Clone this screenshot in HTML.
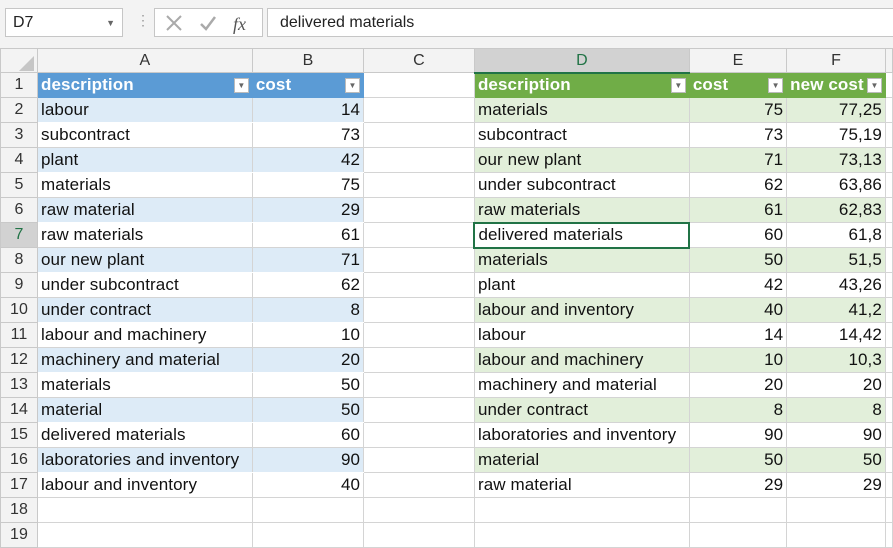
<!DOCTYPE html>
<html><head><style>
*{margin:0;padding:0;box-sizing:border-box}
body{width:893px;height:527px;overflow:hidden;background:#fff;font-family:"Liberation Sans",sans-serif;position:relative}
#top{position:absolute;left:0;top:0;width:893px;height:48px;background:#f3f3f3}
#nb{position:absolute;left:5px;top:8px;width:118px;height:29px;background:#fff;border:1px solid #c6c6c6;font-size:16px;padding:5px 0 0 7px;color:#222}
#nb span{position:absolute;right:7px;top:9px;font-size:9px;color:#666}
#dots{position:absolute;left:136px;top:12px;color:#999;font-size:14px}
#ic{position:absolute;left:154px;top:8px;width:109px;height:29px;background:#fff;border:1px solid #c6c6c6}
#fb{position:absolute;left:267px;top:8px;width:630px;height:29px;background:#fff;border:1px solid #c6c6c6;font-size:16px;padding:5px 0 0 12px;color:#222}
table{position:absolute;left:0;top:48px;border-collapse:collapse;table-layout:fixed;font-size:17px;letter-spacing:0.1px}
td{height:25px;line-height:22px;border:1px solid #d4d4d4;padding:0 3px;white-space:nowrap;overflow:hidden;color:#111}
tr.h td{height:24px;line-height:21px;background:#f3f3f3;text-align:center;color:#333;border-color:#c9c9c9;font-size:16px}
td.r{background:#f3f3f3;text-align:center;color:#333;border-color:#c9c9c9;padding:0;font-size:16px}
.n{text-align:right}
.bh{background:#5b9bd5;color:#fff;font-weight:bold;border-color:#5b9bd5}
.gh{background:#70ad47;color:#fff;font-weight:bold;border-color:#70ad47}
.bb{background:#ddebf7;border-color:#fff #d4d4d4 #fff #d4d4d4}
.gb{background:#e2efda}
.dd{float:right;width:15px;height:15px;background:#fff;border:1px solid #bbb;margin-top:4px;font-size:8px;color:#666;text-align:center;line-height:13px;font-weight:normal}
</style></head><body>
<div id="top">
<div id="nb">D7<span>▼</span></div>
<div id="dots">⋮</div>
<div id="ic"><svg width="109" height="29"><path d="M12 7l14 14M26 7L12 21" stroke="#aaa" stroke-width="2"/><path d="M46 15l5 5 9-12" stroke="#aaa" stroke-width="2.5" fill="none"/><text x="78" y="21" font-family="Liberation Serif" font-style="italic" font-size="18" fill="#555">fx</text></svg></div>
<div id="fb">delivered materials</div>
</div>
<table>
<colgroup><col style="width:36px"><col style="width:215px"><col style="width:112px"><col style="width:112px"><col style="width:215px"><col style="width:98px"><col style="width:99px"><col style="width:6px"></colgroup>
<tr class="h"><td style="padding:0"><svg width="36" height="22" style="display:block"><path d="M33 6L33 21 18 21Z" fill="#c6c6c6"/></svg></td><td>A</td><td>B</td><td>C</td><td style="background:#d2d2d2;color:#217346;border-bottom:2px solid #217346">D</td><td>E</td><td>F</td><td></td></tr>
<tr><td class="r">1</td><td class="bh">description<span class="dd">▼</span></td><td class="bh">cost<span class="dd">▼</span></td><td></td><td class="gh">description<span class="dd">▼</span></td><td class="gh">cost<span class="dd">▼</span></td><td class="gh">new cost<span class="dd">▼</span></td><td></td></tr>
<tr><td class="r">2</td><td class="bb">labour</td><td class="bb n">14</td><td></td><td class="gb">materials</td><td class="gb n">75</td><td class="gb n">77,25</td><td></td></tr>
<tr><td class="r">3</td><td>subcontract</td><td class="n">73</td><td></td><td>subcontract</td><td class="n">73</td><td class="n">75,19</td><td></td></tr>
<tr><td class="r">4</td><td class="bb">plant</td><td class="bb n">42</td><td></td><td class="gb">our new plant</td><td class="gb n">71</td><td class="gb n">73,13</td><td></td></tr>
<tr><td class="r">5</td><td>materials</td><td class="n">75</td><td></td><td>under subcontract</td><td class="n">62</td><td class="n">63,86</td><td></td></tr>
<tr><td class="r">6</td><td class="bb">raw material</td><td class="bb n">29</td><td></td><td class="gb">raw materials</td><td class="gb n">61</td><td class="gb n">62,83</td><td></td></tr>
<tr><td class="r" style="background:#d2d2d2;color:#217346">7</td><td>raw materials</td><td class="n">61</td><td></td><td style="border:2px solid #217346">delivered materials</td><td class="n">60</td><td class="n">61,8</td><td></td></tr>
<tr><td class="r">8</td><td class="bb">our new plant</td><td class="bb n">71</td><td></td><td class="gb">materials</td><td class="gb n">50</td><td class="gb n">51,5</td><td></td></tr>
<tr><td class="r">9</td><td>under subcontract</td><td class="n">62</td><td></td><td>plant</td><td class="n">42</td><td class="n">43,26</td><td></td></tr>
<tr><td class="r">10</td><td class="bb">under contract</td><td class="bb n">8</td><td></td><td class="gb">labour and inventory</td><td class="gb n">40</td><td class="gb n">41,2</td><td></td></tr>
<tr><td class="r">11</td><td>labour and machinery</td><td class="n">10</td><td></td><td>labour</td><td class="n">14</td><td class="n">14,42</td><td></td></tr>
<tr><td class="r">12</td><td class="bb">machinery and material</td><td class="bb n">20</td><td></td><td class="gb">labour and machinery</td><td class="gb n">10</td><td class="gb n">10,3</td><td></td></tr>
<tr><td class="r">13</td><td>materials</td><td class="n">50</td><td></td><td>machinery and material</td><td class="n">20</td><td class="n">20</td><td></td></tr>
<tr><td class="r">14</td><td class="bb">material</td><td class="bb n">50</td><td></td><td class="gb">under contract</td><td class="gb n">8</td><td class="gb n">8</td><td></td></tr>
<tr><td class="r">15</td><td>delivered materials</td><td class="n">60</td><td></td><td>laboratories and inventory</td><td class="n">90</td><td class="n">90</td><td></td></tr>
<tr><td class="r">16</td><td class="bb">laboratories and inventory</td><td class="bb n">90</td><td></td><td class="gb">material</td><td class="gb n">50</td><td class="gb n">50</td><td></td></tr>
<tr><td class="r">17</td><td>labour and inventory</td><td class="n">40</td><td></td><td>raw material</td><td class="n">29</td><td class="n">29</td><td></td></tr>
<tr><td class="r">18</td><td></td><td></td><td></td><td></td><td></td><td></td><td></td></tr>
<tr><td class="r">19</td><td></td><td></td><td></td><td></td><td></td><td></td><td></td></tr>
</table>
</body></html>
